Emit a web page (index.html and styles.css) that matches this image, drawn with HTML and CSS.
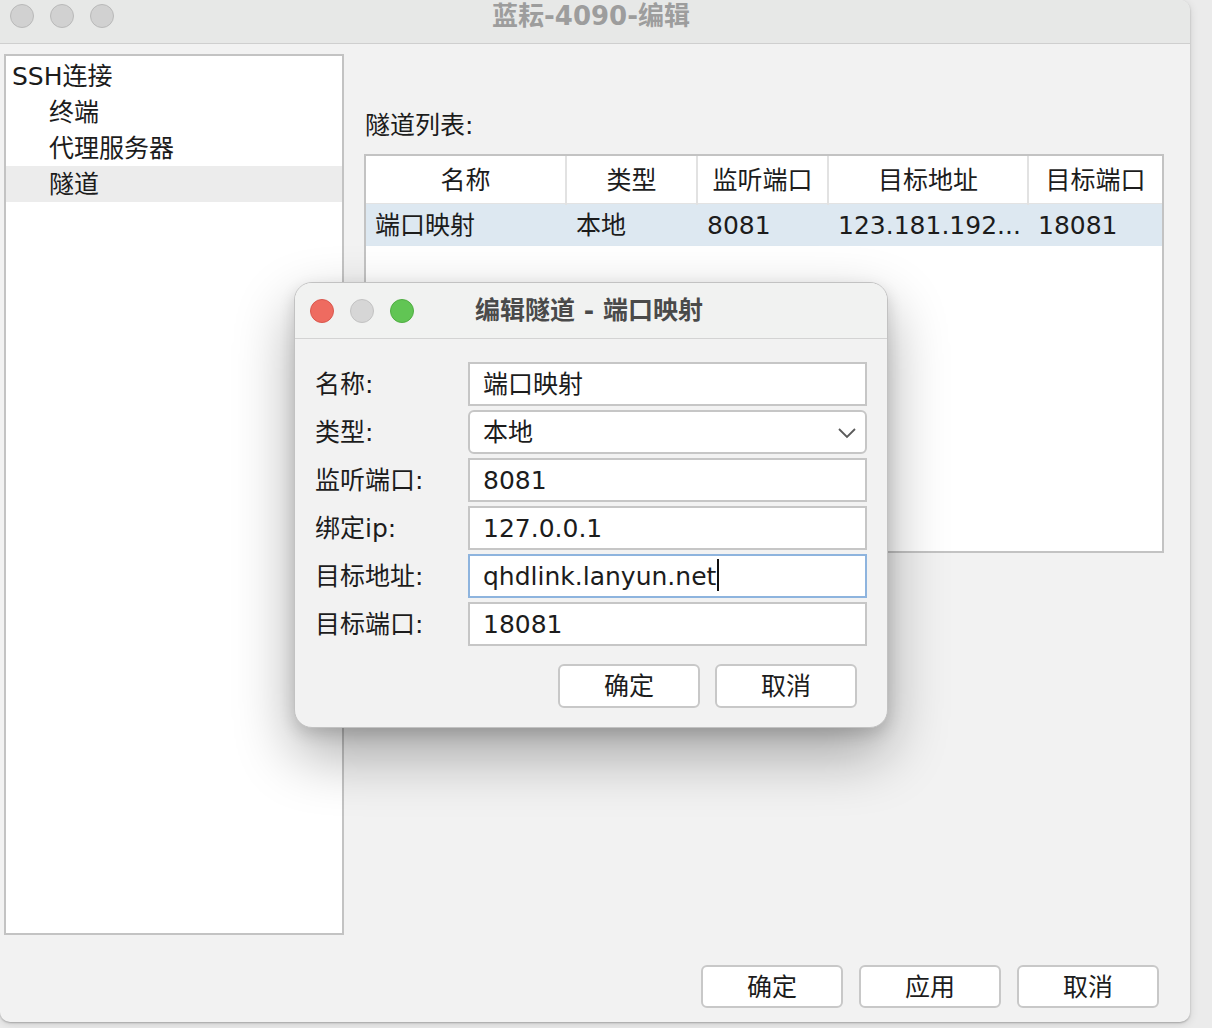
FILE: index.html
```html
<!DOCTYPE html>
<html lang="zh">
<head>
<meta charset="utf-8">
<title>蓝耘-4090-编辑</title>
<link rel="stylesheet" href="styles.css">
</head>
<body>
<div class="screen">
  <div class="window">
    <div class="titlebar">
      <div class="lights">
        <span class="light"></span><span class="light"></span><span class="light"></span>
      </div>
      <div class="title">蓝耘-4090-编辑</div>
      <div></div>
    </div>
    <div class="main">
      <div class="tree">
        <div class="node root">SSH连接</div>
        <div class="node child">终端</div>
        <div class="node child">代理服务器</div>
        <div class="node child selected">隧道</div>
      </div>
      <div class="content">
        <div class="section-label">隧道列表:</div>
        <div class="table">
          <div class="thead">
            <div class="th">名称</div>
            <div class="th">类型</div>
            <div class="th">监听端口</div>
            <div class="th">目标地址</div>
            <div class="th last">目标端口</div>
          </div>
          <div class="tr selected-row">
            <div class="td">端口映射</div>
            <div class="td">本地</div>
            <div class="td">8081</div>
            <div class="td">123.181.192...</div>
            <div class="td">18081</div>
          </div>
        </div>
      </div>
    </div>
    <div class="footer">
      <div class="btn">确定</div>
      <div class="btn">应用</div>
      <div class="btn">取消</div>
    </div>
  </div>

  <div class="dialog">
    <div class="dtitlebar">
      <div class="dlights">
        <span class="dlight red"></span><span class="dlight gray"></span><span class="dlight green"></span>
      </div>
      <div class="dtitle">编辑隧道 - 端口映射</div>
      <div></div>
    </div>
    <div class="form">
      <div class="flabel">名称:</div>
      <div class="field">端口映射</div>
      <div class="flabel">类型:</div>
      <div class="field select">本地
        <svg class="chev" width="20" height="12" viewBox="0 0 20 12"><polyline points="2,2 10,10 18,2" fill="none" stroke="#5a5a5a" stroke-width="1.8"/></svg>
      </div>
      <div class="flabel">监听端口:</div>
      <div class="field">8081</div>
      <div class="flabel">绑定ip:</div>
      <div class="field">127.0.0.1</div>
      <div class="flabel">目标地址:</div>
      <div class="field focused">qhdlink.lanyun.net<span class="caret"></span></div>
      <div class="flabel">目标端口:</div>
      <div class="field">18081</div>
    </div>
    <div class="dbuttons">
      <div class="dbtn">确定</div>
      <div class="dbtn">取消</div>
    </div>
  </div>
</div>
</body>
</html>
```

FILE: styles.css
```css
* { box-sizing: border-box; }
body {
  margin: 0;
  background: #ebebeb;
  font-family: "DejaVu Sans", "Noto Sans CJK SC", sans-serif;
  font-size: 25px;
  color: #1c1c1c;
}
.screen {
  position: relative;
  width: 1212px;
  height: 1028px;
  overflow: hidden;
}
.window {
  width: 1190px;
  height: 1022px;
  background: #f2f2f2;
  border-radius: 0 10px 10px 10px;
  box-shadow: 0 1px 2px rgba(0,0,0,0.25), 0 2px 10px rgba(0,0,0,0.12);
  display: flex;
  flex-direction: column;
}
.titlebar {
  height: 44px;
  flex: none;
  background: #e7e8e7;
  border-bottom: 1px solid #cfcfcf;
  border-top-right-radius: 10px;
  display: grid;
  grid-template-columns: 1fr auto 1fr;
  align-items: start;
}
.lights {
  display: flex;
  gap: 16px;
  padding: 4px 0 0 10px;
}
.light {
  width: 24px;
  height: 24px;
  border-radius: 50%;
  background: #d1d1d1;
  border: 1px solid #b9b9b9;
}
.title {
  font-weight: bold;
  font-size: 26px;
  line-height: 32px;
  color: #9d9d9d;
  padding-right: 8px;
}
.main {
  display: flex;
  margin-top: 10px;
  padding-left: 4px;
  height: 881px;
  flex: none;
}
.tree {
  width: 340px;
  height: 881px;
  border: 2px solid #c3c3c3;
  background: #fff;
  padding-top: 2px;
}
.node {
  height: 36px;
  line-height: 38px;
  padding-left: 6px;
  white-space: nowrap;
}
.node.child { padding-left: 43px; }
.node.selected { background: #ececec; }
.content {
  margin-left: 20px;
  width: 800px;
}
.section-label {
  margin-top: 55px;
  height: 32px;
  line-height: 34px;
  padding-left: 1px;
}
.table {
  margin-top: 13px;
  width: 800px;
  height: 399px;
  border: 2px solid #c3c3c3;
  background: #fff;
}
.thead, .tr {
  display: grid;
  grid-template-columns: 201px 131px 131px 200px 1fr;
}
.thead {
  height: 48px;
  border-bottom: 1px solid #e3e3e3;
}
.th {
  text-align: center;
  line-height: 49px;
  border-right: 2px solid #e2e2e2;
  white-space: nowrap;
}
.th.last { border-right: none; }
.tr {
  height: 42px;
}
.selected-row { background: #dde8f1; }
.td {
  padding-left: 9px;
  line-height: 44px;
  white-space: nowrap;
  overflow: hidden;
}
.footer {
  margin-top: 30px;
  display: flex;
  justify-content: flex-end;
  gap: 16px;
  padding-right: 31px;
}
.btn, .dbtn {
  width: 142px;
  height: 43px;
  background: #fff;
  border: 2px solid #c8c8c8;
  border-radius: 6px;
  text-align: center;
  line-height: 41px;
}
.dialog {
  position: absolute;
  left: 294px;
  top: 282px;
  width: 594px;
  height: 446px;
  background: #f2f2f2;
  border: 1px solid #c2c2c2;
  border-radius: 18px;
  box-shadow: 0 26px 60px rgba(0,0,0,0.33), 0 6px 16px rgba(0,0,0,0.14);
  overflow: hidden;
}
.dtitlebar {
  height: 56px;
  background: #f1f2f1;
  border-bottom: 1px solid #d3d3d3;
  display: grid;
  grid-template-columns: 1fr auto 1fr;
  align-items: center;
}
.dlights {
  display: flex;
  gap: 16px;
  padding-left: 15px;
}
.dlight {
  width: 24px;
  height: 24px;
  border-radius: 50%;
}
.dlight.red { background: #ee6b60; border: 1px solid #d9574d; }
.dlight.gray { background: #d6d6d6; border: 1px solid #c2c2c2; }
.dlight.green { background: #61c554; border: 1px solid #50ad43; }
.dtitle {
  font-weight: bold;
  font-size: 25px;
  color: #4a4a4a;
  line-height: 32px;
  padding-right: 4px;
}
.form {
  display: grid;
  grid-template-columns: 153px 399px;
  grid-auto-rows: 44px;
  row-gap: 4px;
  padding: 23px 0 0 20px;
}
.flabel {
  line-height: 46px;
  white-space: nowrap;
}
.field {
  position: relative;
  background: #fff;
  border: 2px solid #c6c6c6;
  padding-left: 13px;
  line-height: 42px;
  white-space: nowrap;
}
.field.select { border-radius: 6px; }
.field.focused { border-color: #8eb4de; }
.chev {
  position: absolute;
  right: 8px;
  top: 15px;
}
.caret {
  display: inline-block;
  width: 2px;
  height: 32px;
  background: #111;
  vertical-align: middle;
  margin-left: 1px;
  margin-top: -6px;
}
.dbuttons {
  display: flex;
  justify-content: flex-end;
  gap: 15px;
  margin-top: 18px;
  padding-right: 30px;
}
.dbtn { height: 44px; line-height: 42px; }
```
